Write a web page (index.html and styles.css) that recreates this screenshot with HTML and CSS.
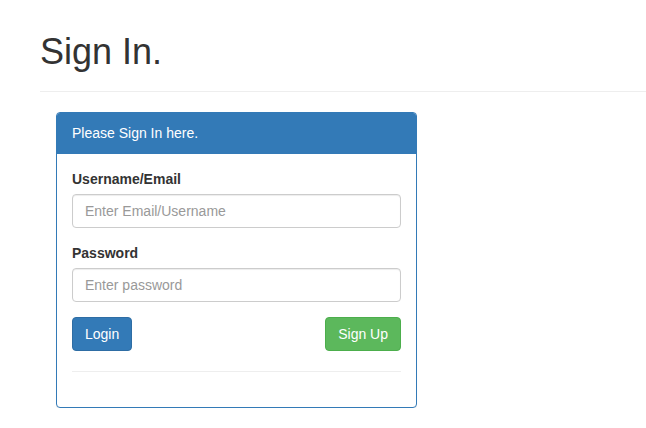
FILE: index.html
```html
<!DOCTYPE html>
<html>
<head>
<meta charset="utf-8">
<link rel="stylesheet" href="styles.css">
</head>
<body>
<div class="page">
  <div class="page-header">
    <h1>Sign In.</h1>
  </div>
  <div class="panel">
    <div class="panel-heading">Please Sign In here.</div>
    <div class="panel-body">
      <form>
        <div class="form-group">
          <label>Username/Email</label>
          <input type="text" class="form-control" placeholder="Enter Email/Username">
        </div>
        <div class="form-group">
          <label>Password</label>
          <input type="password" class="form-control" placeholder="Enter password">
        </div>
        <div class="actions">
          <button type="button" class="btn btn-primary">Login</button>
          <button type="button" class="btn btn-success">Sign Up</button>
        </div>
      </form>
      <hr class="divider">
    </div>
  </div>
</div>
</body>
</html>
```
FILE: styles.css
```css
* { box-sizing: border-box; }
html, body { margin: 0; padding: 0; background: #fff; }
body {
  font-family: "Liberation Sans", Arial, sans-serif;
  font-size: 14px;
  line-height: 1.42857143;
  color: #333;
}
.page {
  padding: 32px 0 0 40px;
}
.page-header {
  padding-bottom: 9px;
  margin: 0 0 20px;
  border-bottom: 1px solid #eee;
}
.page-header h1 {
  margin: 0 0 10px;
  font-size: 36px;
  font-weight: 500;
  line-height: 1.1;
  color: #333;
}
.panel {
  margin-left: 16px;
  width: 361px;
  border: 1px solid #337ab7;
  border-radius: 4px;
  background: #fff;
  box-shadow: 0 1px 1px rgba(0,0,0,.05);
}
.panel-heading {
  background: #337ab7;
  color: #fff;
  padding: 10px 15px;
  line-height: 20px;
  border-bottom: 1px solid #337ab7;
  border-radius: 3px 3px 0 0;
}
.panel-body {
  padding: 15px;
}
form { margin: 0; }
.form-group { margin-bottom: 15px; }
label {
  display: inline-block;
  margin-bottom: 5px;
  font-weight: bold;
  line-height: 20px;
}
.form-control {
  display: block;
  width: 100%;
  height: 34px;
  padding: 6px 12px;
  font-family: inherit;
  font-size: 14px;
  line-height: 1.42857143;
  color: #555;
  background: #fff;
  border: 1px solid #ccc;
  border-radius: 4px;
  box-shadow: inset 0 1px 1px rgba(0,0,0,.075);
  margin: 0;
}
.form-control::placeholder { color: #999; opacity: 1; }
.actions {
  display: flex;
  justify-content: space-between;
}
.btn {
  display: inline-block;
  height: 34px;
  padding: 6px 12px;
  font-family: inherit;
  font-size: 14px;
  line-height: 1.42857143;
  border: 1px solid transparent;
  border-radius: 4px;
  color: #fff;
  margin: 0;
  cursor: pointer;
}
.btn-primary { background: #337ab7; border-color: #2e6da4; }
.btn-success { background: #5cb85c; border-color: #4cae4c; }
.divider {
  margin: 20px 0;
  border: 0;
  border-top: 1px solid #eee;
  height: 0;
}
```
